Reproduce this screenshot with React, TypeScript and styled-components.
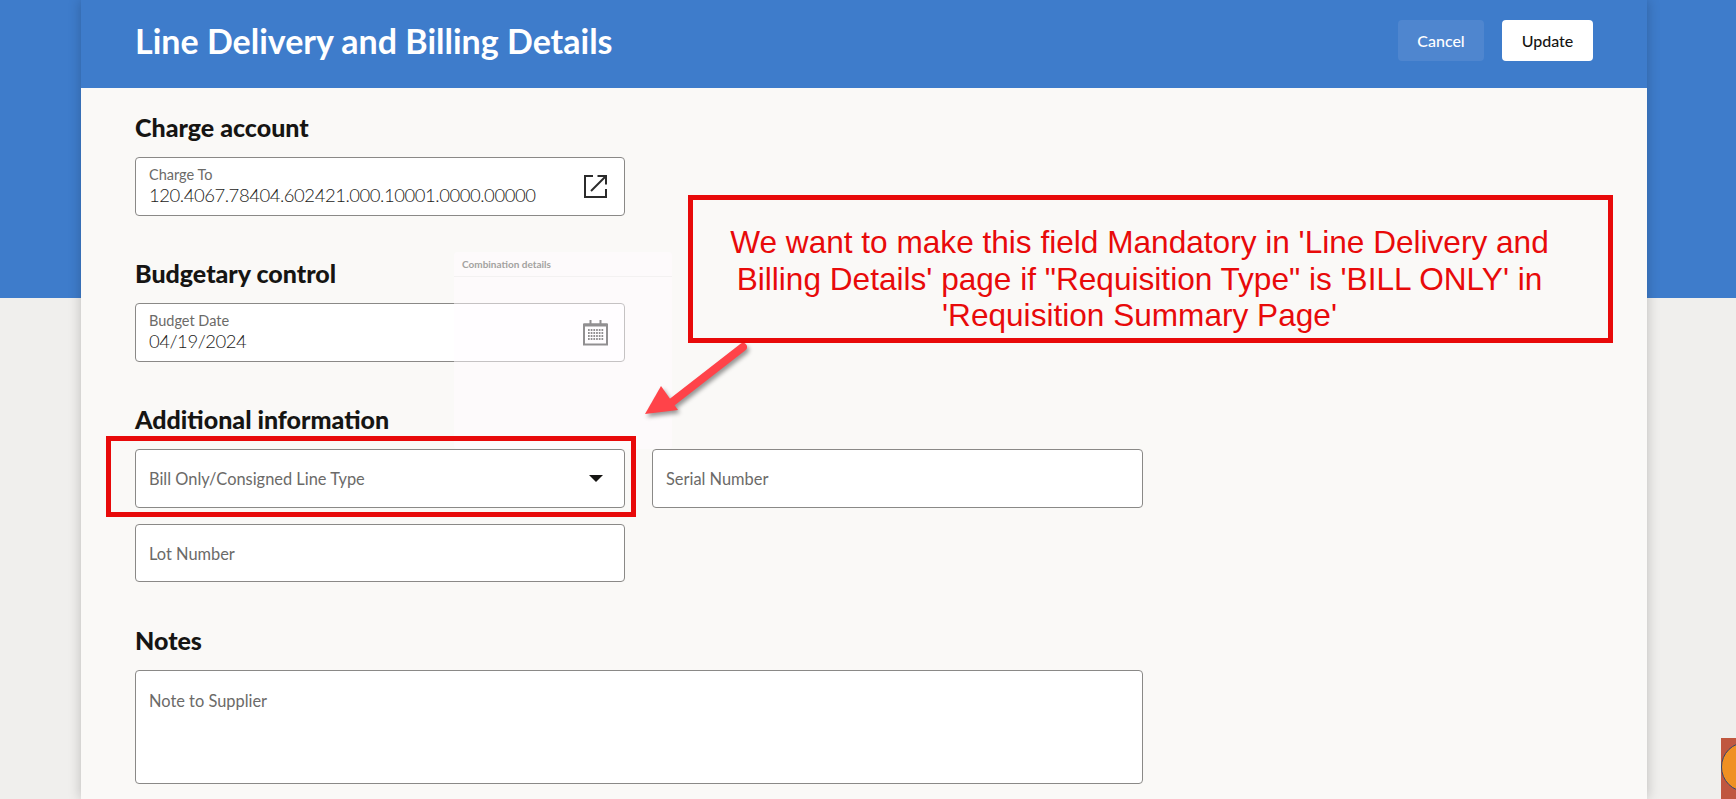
import styled, { createGlobalStyle } from "styled-components";

const GlobalStyle = createGlobalStyle`
	html, body {
		margin: 0;
		padding: 0;
		font-family: "Lato", "Noto Sans", sans-serif;
		overflow: hidden;
	}
`;

function ExternalIcon() {
	return (
		<svg width="25" height="25" viewBox="0 0 25 25" fill="none" stroke="#2b2b2b" strokeWidth="2">
			<path d="M10 2H2v21h21v-8" />
			<path d="M8 17L22 3" />
			<path d="M14.5 2H23v8.5" />
		</svg>
	);
}

function CalendarIcon() {
	const dots = [];
	for (let row = 0; row < 4; row++) {
		for (let col = 0; col < 6; col++) {
			dots.push(<rect key={`${row}-${col}`} x={5 + col * 2.7} y={9 + row * 3} width="1.7" height="2" />);
		}
	}
	return (
		<svg width="25" height="26" viewBox="0 0 25 26" fill="#222">
			<path d="M1 4.5h23v20H1z" fill="none" stroke="#222" strokeWidth="2" />
			<rect x="1" y="3.5" width="23" height="3" />
			<rect x="6.5" y="0" width="2" height="6" />
			<rect x="16.5" y="0" width="2" height="6" />
			{dots}
		</svg>
	);
}

export default function App() {
	return (
		<>
			<GlobalStyle />
			<Page>
				<Panel>
					<Header>
						<Title>Line Delivery and Billing Details</Title>
						<Actions>
							<CancelButton>Cancel</CancelButton>
							<UpdateButton>Update</UpdateButton>
						</Actions>
					</Header>
					<Body>
						<Section>
							<Heading>Charge account</Heading>
							<Field>
								<FieldText>
									<SmallLabel>Charge To</SmallLabel>
									<Value>120.4067.78404.602421.000.10001.0000.00000</Value>
								</FieldText>
								<ExternalIcon />
							</Field>
						</Section>
						<Section>
							<Heading>Budgetary control</Heading>
							<Field>
								<FieldText>
									<SmallLabel>Budget Date</SmallLabel>
									<Value>04/19/2024</Value>
								</FieldText>
								<CalendarIcon />
							</Field>
						</Section>
						<Section>
							<Heading>Additional information</Heading>
							<FieldGrid>
								<Field>
									<Placeholder>Bill Only/Consigned Line Type</Placeholder>
									<Caret />
									<Highlight />
								</Field>
								<Field>
									<Placeholder>Serial Number</Placeholder>
								</Field>
								<Field $short>
									<Placeholder>Lot Number</Placeholder>
								</Field>
							</FieldGrid>
						</Section>
						<Section>
							<Heading>Notes</Heading>
							<NoteArea>
								<Placeholder>Note to Supplier</Placeholder>
							</NoteArea>
						</Section>
					</Body>
					<GhostPanel>
						<GhostHeader>Combination details</GhostHeader>
					</GhostPanel>
					<Callout>
						We want to make this field Mandatory in 'Line Delivery and
						<br />
						Billing Details' page if "Requisition Type" is 'BILL ONLY' in
						<br />
						'Requisition Summary Page'
					</Callout>
					<Arrow width="120" height="90" viewBox="0 0 120 90">
						<path d="M102 5L30 61" stroke="#ff4349" strokeWidth="8" strokeLinecap="round" fill="none" />
						<path d="M4 72L20 44L37 68Z" fill="#ff4349" />
					</Arrow>
				</Panel>
				<CornerBadge>
					<BadgeCoin />
				</CornerBadge>
			</Page>
		</>
	);
}

const Page = styled.div`
	position: relative;
	height: 799px;
	overflow: hidden;
	background: linear-gradient(#3e7ccb 298px, #f0efed 298px);
`;

const Panel = styled.div`
	position: relative;
	width: 1566px;
	height: 799px;
	margin-left: 81px;
	background: #faf9f7;
	box-shadow: 0 0 12px rgba(0, 0, 0, 0.22);
`;

const Header = styled.header`
	display: flex;
	align-items: center;
	justify-content: space-between;
	box-sizing: border-box;
	height: 88px;
	padding: 0 54px 7px;
	background: #3e7ccb;
`;

const Title = styled.h1`
	margin: 0;
	color: #fff;
	font-size: 34px;
	font-weight: 700;
`;

const Actions = styled.div`
	display: flex;
	gap: 18px;
`;

const CancelButton = styled.button`
	width: 86px;
	height: 41px;
	border: none;
	border-radius: 4px;
	background: #4f86cf;
	color: #fff;
	font: 500 16px "Lato", sans-serif;
`;

const UpdateButton = styled(CancelButton)`
	width: 91px;
	background: #fff;
	color: #161513;
`;

const Body = styled.div`
	display: flex;
	flex-direction: column;
	gap: 42px;
	padding: 24px 54px 0;
`;

const Section = styled.section`
	display: flex;
	flex-direction: column;
	gap: 15px;
`;

const Heading = styled.h2`
	margin: 0;
	color: #161513;
	font-size: 25px;
	line-height: 30px;
	font-weight: 900;
`;

const Field = styled.div<{ $short?: boolean }>`
	position: relative;
	box-sizing: border-box;
	display: flex;
	align-items: center;
	justify-content: space-between;
	width: 490px;
	height: ${(p) => (p.$short ? "58px" : "59px")};
	padding: 0 16px 0 13px;
	border: 1px solid #8a8987;
	border-radius: 4px;
	background: #fff;
`;

const FieldGrid = styled.div`
	display: grid;
	grid-template-columns: 490px 491px;
	column-gap: 27px;
	row-gap: 16px;
	padding-bottom: 1px;

	& > div {
		width: 100%;
	}
`;

const FieldText = styled.div`
	display: flex;
	flex-direction: column;
`;

const SmallLabel = styled.span`
	color: #6b6a68;
	font-size: 14.5px;
	line-height: 17px;
`;

const Value = styled.span`
	color: #1c1b19;
	font-size: 18.5px;
	font-weight: 300;
	letter-spacing: -0.46px;
	line-height: 24px;
`;

const Placeholder = styled.span`
	color: #6b6a68;
	font-size: 16.4px;
`;

const Caret = styled.span`
	width: 0;
	height: 0;
	margin-right: 5px;
	border-left: 7px solid transparent;
	border-right: 7px solid transparent;
	border-top: 7px solid #161513;
`;

const Highlight = styled.span`
	position: absolute;
	z-index: 2;
	top: -14px;
	left: -30px;
	width: 530px;
	height: 81px;
	box-sizing: border-box;
	border: 5px solid #e80a0a;
`;

const NoteArea = styled.div`
	box-sizing: border-box;
	width: 1008px;
	height: 114px;
	padding: 20px 13px;
	border: 1px solid #8a8987;
	border-radius: 4px;
	background: #fff;
`;

const GhostPanel = styled.div`
	position: absolute;
	top: 252px;
	left: 373px;
	width: 218px;
	height: 197px;
	border-radius: 3px;
	background: rgba(255, 251, 255, 0.5);
`;

const GhostHeader = styled.div`
	box-sizing: border-box;
	height: 25px;
	padding: 6px 8px;
	border-bottom: 1px solid #f3f1f1;
	color: #a3a2a0;
	font-size: 10px;
	font-weight: 700;
`;

const Callout = styled.div`
	position: absolute;
	top: 195px;
	left: 607px;
	box-sizing: border-box;
	width: 925px;
	height: 148px;
	padding: 24px 22px 0 0;
	border: 5px solid #e80a0a;
	color: #e80a0a;
	font: 31.6px/36.5px "Liberation Sans", Arial, sans-serif;
	text-align: center;
	white-space: nowrap;
`;

const Arrow = styled.svg`
	position: absolute;
	top: 342px;
	left: 560px;
	overflow: visible;
	filter: drop-shadow(2px 3px 2px rgba(0, 0, 0, 0.4));
`;

const CornerBadge = styled.div`
	position: absolute;
	top: 738px;
	left: 1721px;
	width: 15px;
	height: 61px;
	overflow: hidden;
	background: #c0573f;
`;

const BadgeCoin = styled.div`
	box-sizing: border-box;
	width: 50px;
	height: 50px;
	margin-top: 4px;
	border: 1px solid #33456e;
	border-radius: 50%;
	background: #f09022;
`;
